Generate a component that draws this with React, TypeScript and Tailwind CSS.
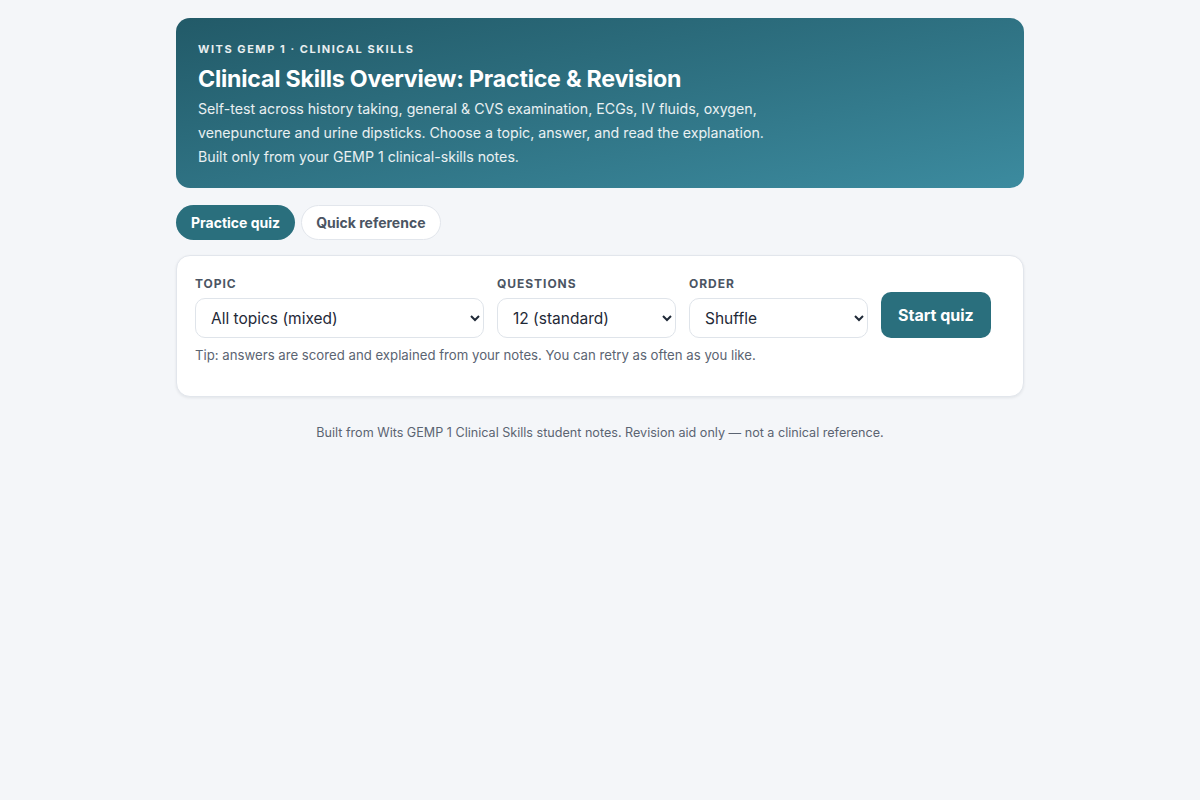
import React, { useState } from 'react';

export default function App() {
  const [tab, setTab] = useState<'quiz' | 'ref'>('quiz');
  const [topic, setTopic] = useState('all');
  const [count, setCount] = useState('12');
  const [order, setOrder] = useState('shuffle');

  return (
    <div className="min-h-screen bg-[#f4f6f9] font-['Inter','Noto_Sans',sans-serif] text-[#1f2937]">
      <div className="mx-auto w-[848px] pt-[18px]">
        <header className="rounded-[14px] bg-gradient-to-br from-[#225a68] to-[#3c8b9f] px-[22px] pt-[24px] pb-[19px] text-white">
          <div className="text-[11px] font-bold uppercase leading-[14px] tracking-[0.14em] text-white/90">
            Wits GEMP 1 · Clinical Skills
          </div>
          <h1 className="mt-[8px] text-[23.2px] font-bold leading-[30px] tracking-[-0.01em]">
            Clinical Skills Overview: Practice &amp; Revision
          </h1>
          <p className="mt-[3px] max-w-[580px] text-[14.2px] leading-[24px] text-white/90">
            Self-test across history taking, general &amp; CVS examination, ECGs, IV fluids, oxygen, venepuncture and urine dipsticks. Choose a topic, answer, and read the explanation. Built only from your GEMP 1 clinical-skills notes.
          </p>
        </header>

        <div className="mt-[17px] flex gap-[6px]">
          <button
            onClick={() => setTab('quiz')}
            className={`h-[35px] rounded-full px-[15px] text-[14px] font-bold ${tab === 'quiz' ? 'bg-[#2a6f7d] text-white' : 'border border-[#e2e6ec] bg-white text-[#4b5563]'}`}
          >
            Practice quiz
          </button>
          <button
            onClick={() => setTab('ref')}
            className={`h-[35px] rounded-full px-[14px] text-[14px] font-bold ${tab === 'ref' ? 'bg-[#2a6f7d] text-white' : 'border border-[#e2e6ec] bg-white text-[#4b5563]'}`}
          >
            Quick reference
          </button>
        </div>

        <section className="mt-[15px] rounded-[14px] border border-[#e2e6ec] bg-white px-[18px] pt-[21px] pb-[32px] shadow-[0_1px_3px_rgba(15,23,42,0.08)]">
          <div className="flex items-end gap-[13px]">
            <label className="flex flex-col">
              <span className="mb-[7px] text-[12px] font-bold uppercase leading-[14px] tracking-[0.08em] text-[#4b5563]">Topic</span>
              <select
                value={topic}
                onChange={e => setTopic(e.target.value)}
                className="h-[40px] w-[289px] rounded-[10px] border border-[#dfe4ea] bg-white px-[11px] text-[15.5px] text-[#1f2937]"
              >
                <option value="all">All topics (mixed)</option>
                <option value="history">History taking</option>
                <option value="exam">General &amp; CVS examination</option>
                <option value="ecg">ECGs</option>
                <option value="fluids">IV fluids</option>
                <option value="oxygen">Oxygen</option>
                <option value="vene">Venepuncture</option>
                <option value="urine">Urine dipsticks</option>
              </select>
            </label>
            <label className="flex flex-col">
              <span className="mb-[7px] text-[12px] font-bold uppercase leading-[14px] tracking-[0.08em] text-[#4b5563]">Questions</span>
              <select
                value={count}
                onChange={e => setCount(e.target.value)}
                className="h-[40px] w-[179px] rounded-[10px] border border-[#dfe4ea] bg-white px-[11px] text-[15.5px] text-[#1f2937]"
              >
                <option value="6">6 (quick)</option>
                <option value="12">12 (standard)</option>
                <option value="24">24 (long)</option>
              </select>
            </label>
            <label className="flex flex-col">
              <span className="mb-[7px] text-[12px] font-bold uppercase leading-[14px] tracking-[0.08em] text-[#4b5563]">Order</span>
              <select
                value={order}
                onChange={e => setOrder(e.target.value)}
                className="h-[40px] w-[179px] rounded-[10px] border border-[#dfe4ea] bg-white px-[11px] text-[15.5px] text-[#1f2937]"
              >
                <option value="shuffle">Shuffle</option>
                <option value="inorder">In order</option>
              </select>
            </label>
            <button className="h-[46px] rounded-[10px] bg-[#2a6f7d] px-[17px] text-[16px] font-bold text-white">
              Start quiz
            </button>
          </div>
          <p className="mt-[8px] text-[13.2px] leading-[18px] text-[#5b6472]">
            Tip: answers are scored and explained from your notes. You can retry as often as you like.
          </p>
        </section>

        <footer className="mt-[27px] text-center text-[12.6px] leading-[18px] text-[#5b6472]">
          Built from Wits GEMP 1 Clinical Skills student notes. Revision aid only — not a clinical reference.
        </footer>
      </div>
    </div>
  );
}
